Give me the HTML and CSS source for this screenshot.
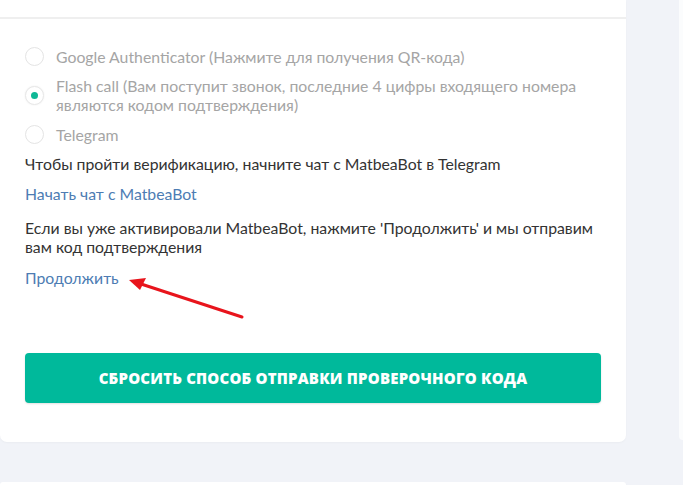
FILE: index.html
```html
<!DOCTYPE html>
<html>
<head>
<meta charset="utf-8">
<link rel="stylesheet" href="styles.css">
</head>
<body>
<div class="page">
  <div class="main">
    <div class="card">
      <div class="card-head"></div>
      <div class="card-body">
        <div class="radios">
          <label class="radio"><span class="dot"></span><span class="rtext">Google Authenticator (Нажмите для получения QR-кода)</span></label>
          <label class="radio checked"><span class="dot"></span><span class="rtext">Flash call (Вам поступит звонок, последние 4 цифры входящего номера являются кодом подтверждения)</span></label>
          <label class="radio"><span class="dot"></span><span class="rtext">Telegram</span></label>
        </div>
        <p class="txt t1">Чтобы пройти верификацию, начните чат с MatbeaBot в Telegram</p>
        <a class="link l1">Начать чат с MatbeaBot</a>
        <p class="txt t2">Если вы уже активировали MatbeaBot, нажмите 'Продолжить' и мы отправим вам код подтверждения</p>
        <div class="cont-row">
          <a class="link">Продолжить</a>
          <svg class="arrow" width="140" height="50" viewBox="0 0 140 50">
            <line x1="118" y1="43" x2="14" y2="9" stroke="#e8141c" stroke-width="3" stroke-linecap="round"/>
            <polygon points="5,6 22,4 16,16" fill="#e8141c"/>
          </svg>
        </div>
        <button class="btn">СБРОСИТЬ СПОСОБ ОТПРАВКИ ПРОВЕРОЧНОГО КОДА</button>
      </div>
    </div>
    <div class="card next"></div>
  </div>
  <div class="side"></div>
</div>
</body>
</html>
```

FILE: styles.css
```css
html, body {
  margin: 0;
  padding: 0;
  background: #f1f3f8;
  overflow: hidden;
}
body {
  font-family: Lato, "Open Sans", sans-serif;
  font-size: 15.8px;
  color: #333;
}
.page {
  display: flex;
  gap: 53px;
  height: 485px;
}
.main {
  width: 626px;
  display: flex;
  flex-direction: column;
  gap: 40px;
}
.card {
  background: #fff;
  border-radius: 0 0 7px 7px;
  box-shadow: 0 1px 2px rgba(0,0,0,0.03);
}
.card-head {
  height: 17px;
  border-bottom: 2px solid #efefef;
}
.card-body {
  padding: 28px 25px 39px 25px;
}
.radios {
  display: flex;
  flex-direction: column;
  gap: 10px;
}
.radio {
  display: flex;
  align-items: center;
  gap: 12px;
  color: #a5a5a5;
  line-height: 19px;
}
.radio:last-child {
  margin-top: 1px;
}
.dot {
  flex: none;
  width: 17px;
  height: 17px;
  border: 1px solid #e4e4e4;
  border-radius: 50%;
  background: #fff;
  position: relative;
}
.checked .dot {
  border-color: #e8e8e8;
  box-shadow: 0 0 2px rgba(0,0,0,0.08);
}
.checked .dot::after {
  content: "";
  position: absolute;
  left: 5px;
  top: 5px;
  width: 7px;
  height: 7px;
  border-radius: 50%;
  background: #0fb896;
}
.rtext {
  max-width: 540px;
}
.txt {
  margin: 0;
  line-height: 19px;
  color: #333;
}
.t1 {
  margin-top: 10px;
}
.link {
  display: block;
  color: #4d7cb3;
  line-height: 19px;
}
.l1 {
  margin-top: 11px;
}
.t2 {
  margin-top: 15px;
}
.cont-row {
  display: flex;
  align-items: flex-start;
  margin-top: 12px;
  height: 85px;
}
.arrow {
  margin-left: 5px;
  margin-top: 6px;
}
.btn {
  display: block;
  width: 100%;
  height: 50px;
  border: 0;
  border-radius: 4px;
  background: #00b99b;
  color: #fff;
  font-family: "Open Sans", sans-serif;
  font-weight: 800;
  font-size: 15px;
  letter-spacing: 0.2px;
  box-shadow: 0 1px 2px rgba(0,0,0,0.12);
}
.next {
  flex: 1;
  border-radius: 7px 7px 0 0;
}
.side {
  flex: 1;
  height: 440px;
  background: #fbfcfd;
  border-radius: 0 0 0 6px;
}
```
